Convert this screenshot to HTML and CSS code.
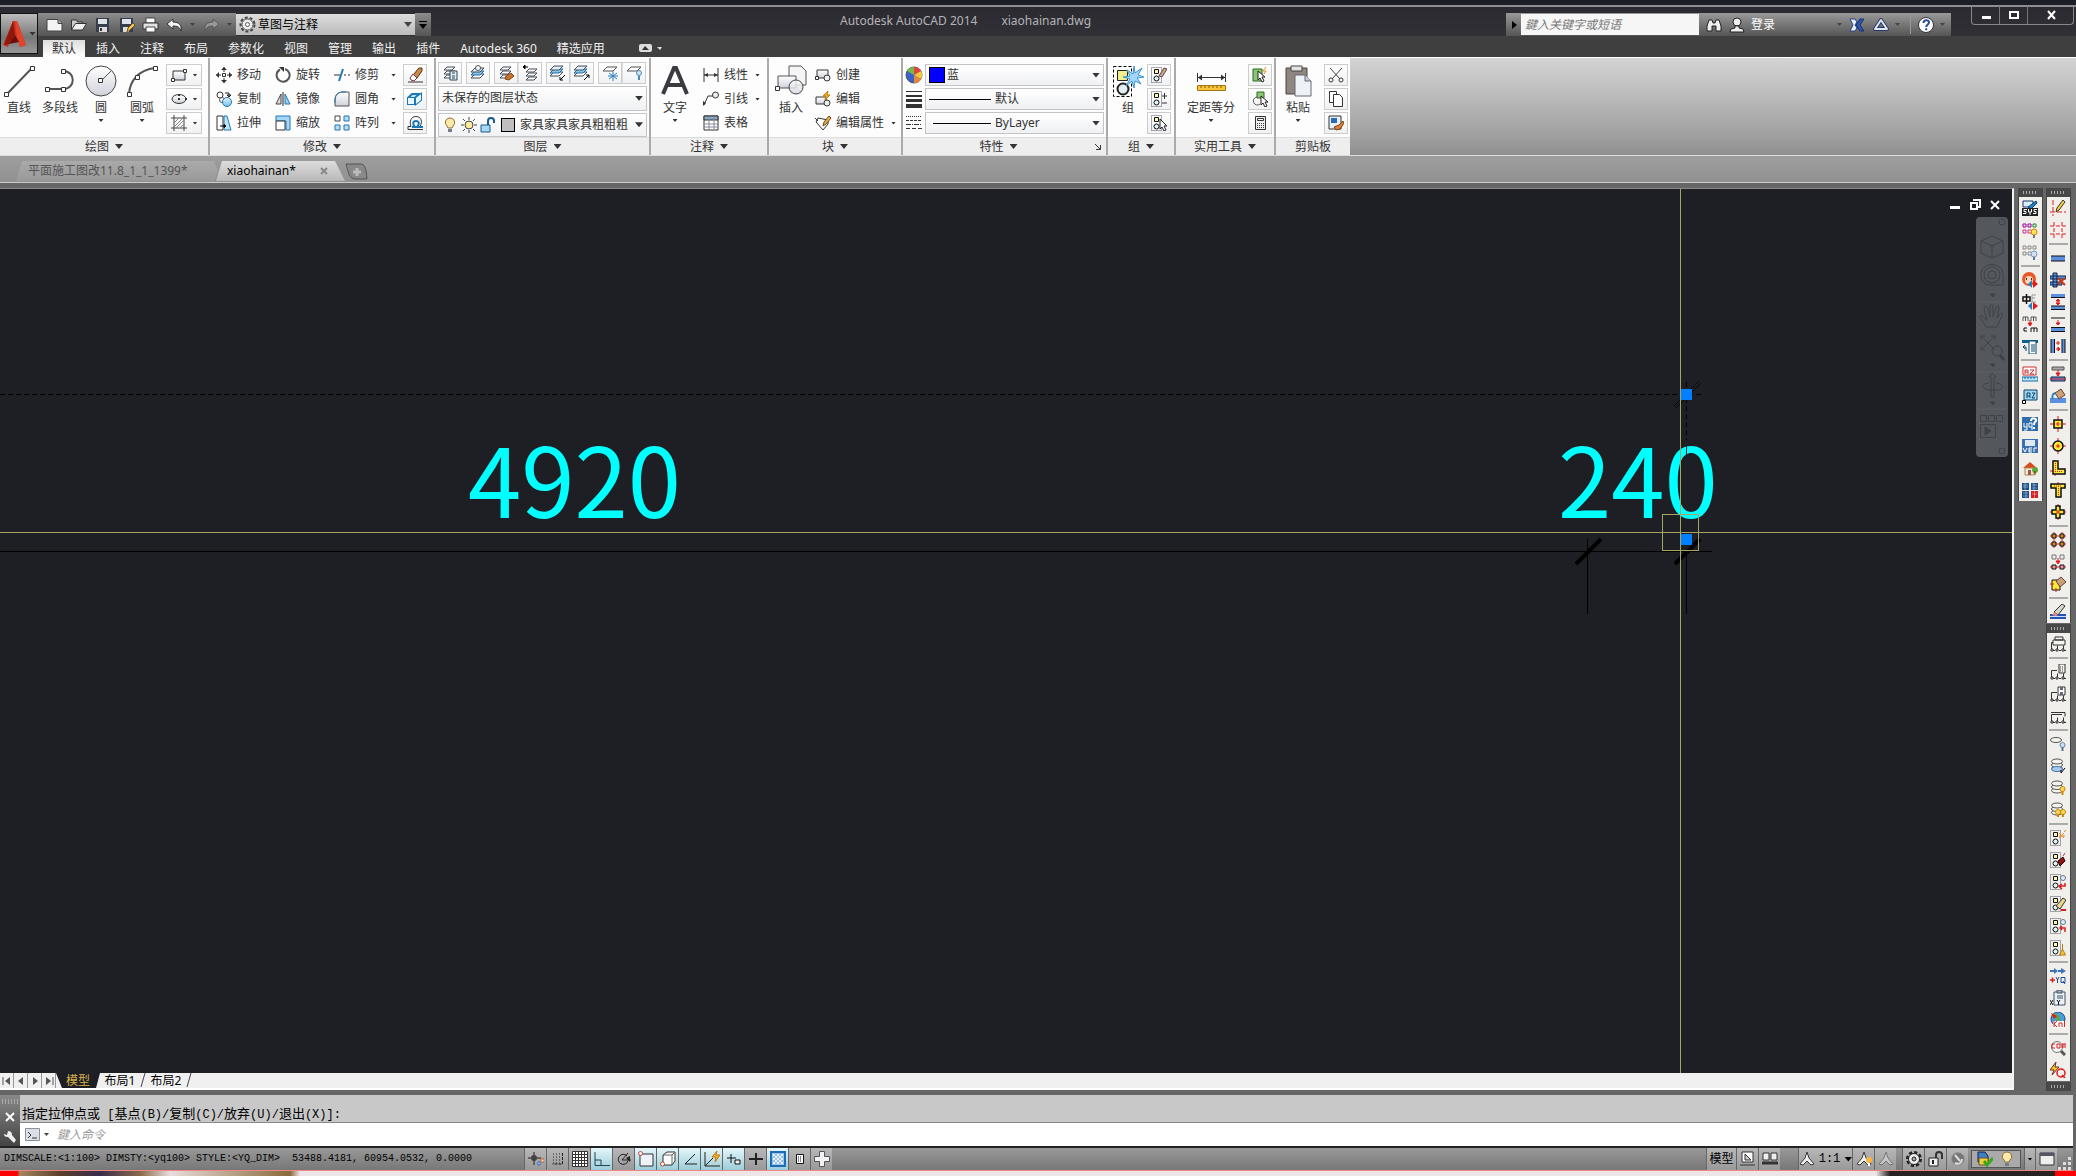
FILE: index.html
```html
<!DOCTYPE html>
<html lang="zh-CN">
<head>
<meta charset="utf-8">
<title>Autodesk AutoCAD 2014 - xiaohainan.dwg</title>
<link rel="stylesheet" href="styles.css">
</head>
<body>
<svg class="sprite" aria-hidden="true">
  <defs>
    <linearGradient id="steel" x1="0" y1="0" x2="0" y2="1"><stop offset="0" stop-color="#fff"/><stop offset="1" stop-color="#cfd2da"/></linearGradient>
    <linearGradient id="ice" x1="0" y1="0" x2="0" y2="1"><stop offset="0" stop-color="#e6f5fd"/><stop offset="1" stop-color="#6fbdea"/></linearGradient>
    <symbol id="stack" viewBox="0 0 16 16"><path d="M5 2h8l-3 3H2zM5 6h8l-3 3H2zM5 10h8l-3 3H2z" fill="#fff" stroke="#444a58"/></symbol>
    <symbol id="bluestack" viewBox="0 0 16 16"><path d="M5 9h9l-4 4H1z" fill="#fff" stroke="#444a58"/><path d="M5 6h9l-4 4H1z" fill="#85c5ec" stroke="#256da8"/><path d="M5 3h9l-4 4H1z" fill="#dfeffa" stroke="#444a58"/></symbol>
    <symbol id="pickset" viewBox="0 0 16 16"><path d="M.5.5h10v15H.5z" fill="none" stroke="#556" stroke-dasharray="1 1"/><path d="M3.500 2.500h4v4h-4z" fill="#fff9b0" stroke="#111"/><circle cx="5.500" cy="11.500" r="2.500" fill="#dff3f5" stroke="#111"/></symbol>
    <symbol id="tree" viewBox="0 0 16 16"><path d="M1.500 13V6.500H7M7.500 13V9.500M13.500 13V9.500M3 14.500h2M9 14.500h2M14 14.500h2" fill="none" stroke="#333"/><path d="M1 13h2v2H1zM6 13h2v2H6zM12 13h2v2h-2z" fill="#fff" stroke="#333"/></symbol>
    <symbol id="ovals" viewBox="0 0 16 16"><g fill="#f4f4ee" stroke="#555"><ellipse cx="7" cy="10.500" rx="5.500" ry="2.500"/><ellipse cx="7" cy="7" rx="5.500" ry="2.500"/><ellipse cx="7" cy="3.500" rx="5.500" ry="2.500"/></g></symbol>
    <symbol id="bulb" viewBox="0 0 16 16"><path d="M8 1a4.500 4.500 0 0 0-3 8l1 2h4l1-2a4.500 4.500 0 0 0-3-8z" fill="#ffe9a8" stroke="#8a713a"/><path d="M6 12h4v3H6z" fill="#777c88"/></symbol>
    <symbol id="compass" viewBox="0 0 16 16"><path d="M8 1L6 7l-5 6 3 1 4-4 4 4 3-1-5-6z" fill="#f0f0f0" stroke="#3a3a3a"/></symbol>
  </defs>
</svg>

<header class="titlebar">
  <button class="appmenu" aria-label="应用程序菜单">
    <svg width="26" height="30" viewBox="0 0 26 30"><path d="M11 2h4l9 24-6 2-1-5-9-1-2 6-5-2z" fill="#c8301e"/><path d="M13 2l2 0 9 24-6 2-3-9z" fill="#e0452c"/><path d="M11 2L2 26l5-1 6-9z" fill="#8f180e"/><path d="M7 25l6-9 4 7z" fill="#6d0e08"/></svg>
    <i class="caret"></i>
  </button>
  <div class="qat">
    <button aria-label="新建"><svg width="18" height="16"><path d="M1 2.500h11l4 4V14H1z" fill="#f4f4f4" stroke="#444"/><path d="M12 2.500v4h4" fill="#aaa" stroke="#444"/></svg></button>
    <button aria-label="打开"><svg width="18" height="16"><path d="M1.500 13V3h5l1 2h5v2" fill="#ccc" stroke="#333"/><path d="M1.500 13l4-6.500h11l-4 6.500z" fill="#f0f0f0" stroke="#333"/></svg></button>
    <button aria-label="保存"><svg width="16" height="16"><path d="M2 1h13v14H2z" fill="#363d4c"/><path d="M4 2h9v5H4z" fill="#dfe2e8"/><path d="M5 10h8v5H5z" fill="#ddd"/><path d="M6 11h2v3H6z" fill="#333"/></svg></button>
    <button aria-label="另存为"><svg width="18" height="16"><path d="M2 1h13v14H2z" fill="#363d4c"/><path d="M4 2h9v5H4z" fill="#dfe2e8"/><path d="M5 10h6v5H5z" fill="#ddd"/><path d="M9 15l1-4 5-5 2 2-5 5z" fill="#f4c353" stroke="#7a5314"/></svg></button>
    <button aria-label="打印"><svg width="18" height="16"><path d="M4 1h9v5H4z" fill="#fff" stroke="#444"/><path d="M1 6h15v6H1z" fill="#e2e2e2" stroke="#333"/><path d="M4 10h9v5H4z" fill="#fff" stroke="#444"/></svg></button>
    <button aria-label="放弃"><svg width="18" height="16"><path d="M1 7l6-5v3c6 0 9 3 8 9-1-4-4-5-8-5v3z" fill="#f4f4f4" stroke="#333"/></svg></button>
    <i class="caret tiny dim"></i>
    <button aria-label="重做"><svg width="18" height="16"><path d="M16 7l-6-5v3C4 5 1 8 2 14c1-4 4-5 8-5v3z" fill="#999" stroke="#555"/></svg></button>
    <i class="caret tiny dim"></i>
  </div>
  <label class="workspace">
    <svg width="17" height="17" viewBox="0 0 17 17"><circle cx="8.500" cy="8.500" r="7" fill="none" stroke="#444" stroke-width="2" stroke-dasharray="3 2"/><circle cx="8.500" cy="8.500" r="5.500" fill="#eee" stroke="#555"/><circle cx="8.500" cy="8.500" r="2" fill="#fff" stroke="#555"/></svg>
    <select aria-label="工作空间"><option>草图与注释</option></select>
    <i class="caret"></i>
  </label>
  <button class="qatmore" aria-label="自定义"><svg width="8" height="10"><path d="M0 1h8v1H0zM0 4h8L4 9z"/></svg></button>
  <h1 class="apptitle"><span>Autodesk AutoCAD 2014</span><span>xiaohainan.dwg</span></h1>
  <div class="infocenter">
    <button class="arrow" aria-label="展开"><svg width="6" height="8"><path d="M1 0l5 4-5 4z"/></svg></button>
    <input type="text" aria-label="搜索" placeholder="鍵入关键字或短语">
    <button aria-label="搜索"><svg width="16" height="16"><path d="M1 14V9l2-6h3l1 3h2l1-3h3l2 6v5h-5V9H6v5z" fill="#eee" stroke="#222"/></svg></button>
    <button class="signin"><svg width="16" height="16"><circle cx="8" cy="5" r="4" fill="#eee" stroke="#222"/><path d="M6 9v2l-4 1-1 3h14l-1-3-4-1V9z" fill="#eee" stroke="#222"/></svg><span>登录</span><i class="caret tiny dim"></i></button>
    <button aria-label="Exchange"><svg width="16" height="16"><path d="M1 2h5l2 3-2 3 2 3-2 3H1l3-6z" fill="#e8eef8" stroke="#24408a"/><path d="M15 2h-4L7 8l4 6h4l-4-6z" fill="#2c55ab" stroke="#18306c"/></svg></button>
    <button class="a360" aria-label="Autodesk 360"><svg width="18" height="16"><path d="M9 3L3 12h12z" fill="none" stroke="#243a6a" stroke-width="4" stroke-linejoin="round"/><path d="M9 3L3 12h12z" fill="none" stroke="#dfe6f2" stroke-width="2" stroke-linejoin="round"/></svg><i class="caret tiny dim"></i></button>
    <button class="help" aria-label="帮助"><svg width="18" height="18"><circle cx="9" cy="9" r="7.500" fill="#fff" stroke="#333"/><path d="M6.500 7c0-4 5.500-3.500 5.500-.5C12 8.500 9.200 8.500 9.200 11M9.200 12.200v2" fill="none" stroke="#2a4f9e" stroke-width="2"/></svg><i class="caret tiny dim"></i></button>
  </div>
  <div class="winbuttons">
    <button aria-label="最小化"><svg width="12" height="12"><path d="M2 7h9v3H2z" fill="#fff"/></svg></button>
    <button aria-label="最大化"><svg width="12" height="12"><path d="M2 3h8v6H2z" fill="none" stroke="#fff" stroke-width="2"/></svg></button>
    <button class="close" aria-label="关闭"><svg width="12" height="12"><path d="M3 2l7 8M10 2l-7 8" stroke="#fff" stroke-width="2"/></svg></button>
  </div>
</header>

<nav class="ribbontabs">
  <button class="on">默认</button><button>插入</button><button>注释</button><button>布局</button><button>参数化</button><button>视图</button><button>管理</button><button>输出</button><button>插件</button><button>Autodesk 360</button><button>精选应用</button>
  <button class="minimize" aria-label="最小化功能区"><svg width="24" height="10"><rect x="0" y="1" width="13" height="8" rx="2" fill="#ddd"/><path d="M3 7l3-4 4 4z" fill="#333"/><path d="M18 4h5l-2 3z" fill="#ddd"/></svg></button>
</nav>

<section class="ribbon">
  <div class="panel draw">
    <div class="body">
      <button class="big w1"><svg width="32" height="32"><path d="M3 30L29 3" stroke="#555" stroke-width="2"/><path d="M1.500 27.500h4v4h-4zM27.500 1.500h4v4h-4z" fill="#fff" stroke="#333"/></svg>直线</button>
      <button class="big w2"><svg width="32" height="32"><path d="M3 24h16c13 0 13-18 0-18" fill="none" stroke="#555" stroke-width="2"/><path d="M1.500 22.500h4v4h-4zM17.500 22.500h4v4h-4zM17.500 4.500h4v4h-4z" fill="#fff" stroke="#333"/></svg>多段线</button>
      <button class="big w1"><svg width="32" height="32"><circle cx="16" cy="16" r="15" fill="url(#steel)" stroke="#444"/><path d="M16 16L26 6" stroke="#555"/><path d="M13.500 13.500h4v4h-4z" fill="#fff" stroke="#333"/></svg>圆<i class="caret tiny"></i></button>
      <button class="big w2"><svg width="32" height="32"><path d="M3 29C4 15 13 5 29 3" fill="none" stroke="#555" stroke-width="2"/><path d="M1.500 27.500h4v4h-4zM9.500 10.500h4v4h-4zM27.500 1.500h4v4h-4z" fill="#fff" stroke="#333"/></svg>圆弧<i class="caret tiny"></i></button>
      <div class="rows">
        <button class="box split" aria-label="矩形"><svg width="16" height="16"><path d="M2 4h12v9H2z" fill="url(#steel)" stroke="#333"/><path d="M.5 11.500h3v3h-3zM12.500 2.500h3v3h-3z" fill="#fff" stroke="#333"/></svg><i class="caret tiny"></i></button>
        <button class="box split" aria-label="椭圆"><svg width="16" height="16"><ellipse cx="8" cy="8" rx="7" ry="4.500" fill="url(#steel)" stroke="#333"/><path d="M7 7h2v2H7zM14 7h2v2h-2zM7 3h2v2H7z" fill="#333"/></svg><i class="caret tiny"></i></button>
        <button class="box split" aria-label="图案填充"><svg width="16" height="16"><path d="M3 0v16M13 0v16M0 3h16M0 13h16" stroke="#444"/><path d="M3 8l5-5M3 12l9-9M5 13l8-8M9 13l4-4" stroke="#888"/></svg><i class="caret tiny"></i></button>
      </div>
    </div>
    <h2>绘图<i class="caret"></i></h2>
  </div>

  <div class="panel modify">
    <div class="body">
      <div class="rows c1">
        <button class="item"><svg width="16" height="16"><path d="M8 0v5M8 11v5M0 8h5M11 8h5" stroke="#333"/><path d="M5 3h6L8 0zM5 13h6l-3 3zM3 5v6L0 8zM13 5v6l3-3z" fill="#333"/><path d="M6.500 6.500h3v3h-3z" fill="#fff" stroke="#333"/></svg>移动</button>
        <button class="item"><svg width="16" height="16"><circle cx="4" cy="4" r="3" fill="#fff" stroke="#333"/><circle cx="6" cy="9" r="2.500" fill="#fff" stroke="#555"/><circle cx="11" cy="11" r="4.500" fill="url(#ice)" stroke="#2277b5"/><path d="M9 2h4v3M11 4h4l-2 2z" fill="none" stroke="#222"/></svg>复制</button>
        <button class="item"><svg width="16" height="16"><path d="M1 1h6v14H1z" fill="#fff" stroke="#333"/><path d="M8 1h3l4 14H8z" fill="#bfe3f7" stroke="#2277b5"/><path d="M4 11h5M8 9.500l2 1.500-2 1.500z" stroke="#000"/></svg>拉伸</button>
      </div>
      <div class="rows c1">
        <button class="item"><svg width="16" height="16"><path d="M5 2.500A6.500 6.500 0 1 0 10 2" fill="none" stroke="#555" stroke-width="2"/><path d="M4 0h5v5z" fill="#333"/></svg>旋转</button>
        <button class="item"><svg width="16" height="16"><path d="M6 3v10H1z" fill="#ddd" stroke="#444"/><path d="M10 3v10h5z" fill="#9bd2f3" stroke="#2277b5"/><path d="M8 1v14" stroke="#222"/></svg>镜像</button>
        <button class="item"><svg width="16" height="16"><path d="M1 1h14v14h-4V6H1z" fill="#a6d7f5" stroke="#2277b5"/><path d="M1 6h9v9H1z" fill="#fff" stroke="#333"/></svg>缩放</button>
      </div>
      <div class="rows c2">
        <button class="item"><svg width="16" height="16"><path d="M0 8h6M10 8h2M14 8h2" stroke="#333"/><path d="M5 14L9 2" stroke="#2277b5" stroke-width="2"/></svg>修剪<i class="caret tiny"></i></button>
        <button class="item"><svg width="16" height="16"><path d="M1 15V9c0-5 3-8 8-8h6v14z" fill="url(#steel)" stroke="#555"/><path d="M1 12V9c0-5 3-8 8-8h3" fill="none" stroke="#2277b5"/></svg>圆角<i class="caret tiny"></i></button>
        <button class="item"><svg width="16" height="16"><path d="M1 1h5v5H1z" fill="#fff" stroke="#444"/><path d="M10 1h5v5h-5zM1 10h5v5H1zM10 10h5v5h-5z" fill="#b5def6" stroke="#2277b5"/></svg>阵列<i class="caret tiny"></i></button>
      </div>
      <div class="rows">
        <button class="box" aria-label="删除"><svg width="16" height="16"><path d="M1 15h15" stroke="#333"/><path d="M6 8l6-7h3v3l-5 7z" fill="#c98a4b" stroke="#5a3413"/><path d="M3 11l3-4 4 4-3 3-3-1z" fill="#fff" stroke="#833"/></svg></button>
        <button class="box" aria-label="分解"><svg width="16" height="16"><path d="M1 7h6v6H1zM1 7l4-4h7L8 7zM9 7l5-4v6l-5 4z" fill="#bfe6fb" stroke="#1878b8" stroke-width="2"/><path d="M1 7h6v6H1zM9 7l5-4v6l-5 4z" fill="#e6f6ff"/></svg></button>
        <button class="box" aria-label="偏移"><svg width="16" height="16"><path d="M1 14.500h15M1 14.500v-3h3c-2-5 0-10 5-10s7 5 4 10h3" fill="none" stroke="#333"/><path d="M5 12h3c-3-3-2-6 1-6s4 3 1 6h6" fill="none" stroke="#1878b8" stroke-width="2"/></svg></button>
      </div>
    </div>
    <h2>修改<i class="caret"></i></h2>
  </div>

  <div class="panel layers">
    <div class="body stackbody">
      <div class="boxrow">
        <button class="box" aria-label="图层特性"><svg width="16" height="16"><use href="#stack"/><path d="M8 6h7v9H8z" fill="#dff0fa" stroke="#345"/><path d="M10 8h3M10 11h3M10 13h3" stroke="#345"/></svg></button>
        <button class="box" aria-label="置为当前"><svg width="16" height="16"><use href="#bluestack"/><circle cx="8" cy="3" r="2.500" fill="#fff" stroke="#555"/></svg></button>
        <span class="pair"><button class="box" aria-label="匹配"><svg width="16" height="16"><use href="#stack"/><path d="M8 11l5-3 3 3-5 4-4-1z" fill="#c5722c" stroke="#8a4410"/></svg></button><button class="box" aria-label="上一个"><svg width="16" height="16"><use href="#stack" x="2" y="2"/><path d="M1 2h5M3 0L1 2l2 2z" stroke="#000"/></svg></button></span>
        <span class="pair"><button class="box" aria-label="隔离"><svg width="16" height="16"><use href="#bluestack" x="-1" y="-2"/><path d="M15 10l-5 5M10 12v3h3" fill="none" stroke="#000"/></svg></button><button class="box" aria-label="取消隔离"><svg width="16" height="16"><use href="#bluestack" x="-1" y="-2"/><path d="M10 15l5-5M12 10h3v3" fill="none" stroke="#000"/></svg></button></span>
        <span class="pair"><button class="box" aria-label="冻结"><svg width="16" height="16"><path d="M5 2h10l-4 4H1z" fill="#fff" stroke="#555"/><path d="M11 6v10M7 8l8 6M15 8l-8 6M6 11h10" stroke="#2a7fc0"/></svg></button><button class="box" aria-label="关"><svg width="16" height="16"><path d="M5 2h10l-4 4H1z" fill="#fff" stroke="#555"/><circle cx="13" cy="8" r="2.500" fill="#cfe9fa" stroke="#4a89b8"/><path d="M12 11h2v4h-2z" fill="#4a89b8"/></svg></button></span>
      </div>
      <label class="combo"><select aria-label="图层状态"><option>未保存的图层状态</option></select><i class="caret"></i></label>
      <label class="combo layer">
        <svg width="16" height="16"><use href="#bulb"/></svg>
        <svg width="16" height="16"><circle cx="8" cy="8" r="4" fill="#ffe9a0" stroke="#444"/><path d="M8 0v3M8 13v3M0 8h3M13 8h3M2 2l2 2M12 12l2 2M14 2l-2 2M4 12l-2 2" stroke="#444"/></svg>
        <svg width="16" height="16"><path d="M1 8h9v7H1z" fill="#a6d7f5" stroke="#1c5a88"/><path d="M8 8V4c0-4 6-4 6 0v2" fill="none" stroke="#1c5a88" stroke-width="2"/></svg>
        <i class="swatch grey"></i>
        <select aria-label="图层"><option>家具家具家具粗粗粗</option></select><i class="caret"></i></label>
    </div>
    <h2>图层<i class="caret"></i></h2>
  </div>

  <div class="panel annotate">
    <div class="body">
      <button class="big w3"><svg width="32" height="32"><path d="M4 29L15 3h2l11 26M9 20h14" fill="none" stroke="#3a3a40" stroke-width="4"/></svg>文字<i class="caret tiny"></i></button>
      <div class="rows c3">
        <button class="item"><svg width="16" height="16"><path d="M1 1v14M15 1v14M1 8h14" stroke="#333"/><path d="M1 8l4-2v4zM15 8l-4-2v4z" fill="#333"/></svg>线性<i class="caret tiny"></i></button>
        <button class="item"><svg width="16" height="16"><path d="M1 14l4-9h5" fill="none" stroke="#333"/><circle cx="12.500" cy="4" r="3" fill="#eee" stroke="#333"/><path d="M0 15v-5l3 2z" fill="#333"/></svg>引线<i class="caret tiny"></i></button>
        <button class="item"><svg width="16" height="16"><path d="M1 1h14v14H1z" fill="#fff" stroke="#333"/><path d="M1 1h14v4H1z" fill="#8aa8c8" stroke="#333"/><path d="M6 2v13M11 2v13M1 9h14M1 12h14" stroke="#889"/></svg>表格</button>
      </div>
    </div>
    <h2>注释<i class="caret"></i></h2>
  </div>

  <div class="panel block">
    <div class="body">
      <button class="big w2"><svg width="32" height="32"><path d="M14 1h12l5 5v14H14z" fill="#f5f5f8" stroke="#555"/><path d="M3 11h18v12H3z" fill="url(#steel)" stroke="#555"/><circle cx="21" cy="22" r="7" fill="url(#steel)" fill-opacity=".8" stroke="#444"/><path d="M.5 21.500h4v4h-4z" fill="#fff" stroke="#333"/></svg>插入</button>
      <div class="rows c4">
        <button class="item"><svg width="16" height="16"><path d="M2 3h11v8H2z" fill="url(#steel)" stroke="#333"/><circle cx="12" cy="11" r="3" fill="#eee" stroke="#333"/><path d="M.5 9.500h3v3h-3z" fill="#fff" stroke="#333"/></svg>创建</button>
        <button class="item"><svg width="16" height="16"><path d="M1 6h10v7H1z" fill="url(#steel)" stroke="#333"/><circle cx="12" cy="12" r="3" fill="#eee" stroke="#333"/><path d="M13 0l-5 5h3l-1 4 5-5h-3z" fill="#f8b12c" stroke="#c5780a"/></svg>编辑</button>
        <button class="item"><svg width="16" height="16"><path d="M0 3l3 3M1 7l2-4 10 2v4l-5 6-6-7z" fill="#fff" stroke="#333"/><path d="M8 11l1-4 5-6 2 2-5 6z" fill="#f0ad4a" stroke="#6d4412"/></svg>编辑属性<i class="caret tiny"></i></button>
      </div>
    </div>
    <h2>块<i class="caret"></i></h2>
  </div>

  <div class="panel props">
    <div class="body stackbody">
      <label class="prop"><svg width="18" height="18"><circle cx="9" cy="9" r="8" fill="#3b62c8" stroke="#555"/><path d="M9 9V1a8 8 0 0 1 7 4z" fill="#e4473a"/><path d="M9 9V1a8 8 0 0 0-7 4z" fill="#79b84a"/><path d="M9 9l7-4a8 8 0 0 1 0 8z" fill="#f4c93c"/><path d="M9 9l7 4a8 8 0 0 1-7 4z" fill="#e58a3a"/></svg>
        <span class="combo"><i class="swatch blue"></i><select aria-label="颜色"><option>蓝</option></select><i class="caret"></i></span></label>
      <label class="prop"><svg width="18" height="18"><path d="M1 1.500h16" stroke="#333"/><path d="M1 6h16" stroke="#333" stroke-width="2"/><path d="M1 10.500h16" stroke="#333" stroke-width="3"/><path d="M1 16h16" stroke="#333" stroke-width="4"/></svg>
        <span class="combo"><i class="rule"></i><select aria-label="线宽"><option>默认</option></select><i class="caret"></i></span></label>
      <label class="prop"><svg width="18" height="18"><path d="M1 2.500h16" stroke="#333" stroke-dasharray="1 1"/><path d="M1 6.500h16" stroke="#333" stroke-dasharray="3 1"/><path d="M1 10.500h16" stroke="#333" stroke-dasharray="5 1 1 1"/><path d="M1 14.500h16" stroke="#333" stroke-dasharray="4 2"/></svg>
        <span class="combo"><i class="rule short"></i><select aria-label="线型"><option>ByLayer</option></select><i class="caret"></i></span></label>
    </div>
    <h2><span></span><span>特性<i class="caret"></i></span><button aria-label="特性面板"><svg width="8" height="8"><path d="M1 1l5 5M2 6.500h4.500V2" fill="none" stroke="#333"/></svg></button></h2>
  </div>

  <div class="panel group">
    <div class="body">
      <button class="big w1"><svg width="32" height="32"><path d="M1.500 1.500h18v30h-18z" fill="none" stroke="#000" stroke-dasharray="3 2"/><path d="M5.500 5.500h10v10h-10z" fill="#f2ee8c" stroke="#222"/><circle cx="11" cy="24" r="5.500" fill="#dff0f2" stroke="#222" stroke-width="2"/><path d="M22 1l1 7 7-5-4 7 6 2-7 1 4 6-6-3-1 7-2-7-6 5 4-7-7-2 7-1-3-6 6 4z" fill="#9fd8fa" stroke="#3f93cf"/></svg>组</button>
      <div class="rows">
        <button class="box" aria-label="解除编组"><svg width="16" height="16"><use href="#pickset"/><path d="M8 9l5-8 3 1-5 8z" fill="#c9a58a" stroke="#644"/></svg></button>
        <button class="box" aria-label="组编辑"><svg width="16" height="16"><use href="#pickset"/><path d="M11 5h5M13.500 2v6M11 12h5" stroke="#333"/></svg></button>
        <button class="box" aria-label="组选择"><svg width="16" height="16"><use href="#pickset"/><path d="M9 4v10l2-2 2 4 2-1-2-4h3z" fill="#fff" stroke="#222"/></svg></button>
      </div>
    </div>
    <h2>组<i class="caret"></i></h2>
  </div>

  <div class="panel utils">
    <div class="body">
      <button class="big w4"><svg width="32" height="32"><path d="M2.500 8v9M30.500 8v9M3 12.500h27" stroke="#333"/><path d="M3 12.500l4-3v6zM30 12.500l-4-3v6z" fill="#333"/><path d="M2.500 20.500h28v5h-28z" fill="#f6c53c" stroke="#a87410"/><path d="M6 21v2M10 21v2M14 21v2M18 21v2M22 21v2M26 21v2" stroke="#865a08"/></svg>定距等分<i class="caret tiny"></i></button>
      <div class="rows">
        <button class="box" aria-label="快速选择"><svg width="16" height="16"><path d="M1 2h9v12H1z" fill="#8cc777" stroke="#2c6a1c"/><path d="M6 4v9l2-2 2 4 2-1-2-4h3z" fill="#fff" stroke="#222"/><path d="M14 0l-3 4h3l-2 3" fill="none" stroke="#f08a1c"/></svg></button>
        <button class="box" aria-label="全部选择"><svg width="16" height="16"><path d="M5 1h7v6H5z" fill="#8cc777" stroke="#2c6a1c"/><path d="M5 6a4 4 0 1 0 3 7" fill="none" stroke="#555"/><path d="M9 5v9l2-2 2 4 2-1-2-4h3z" fill="#fff" stroke="#222"/></svg></button>
        <button class="box" aria-label="计算器"><svg width="16" height="16"><path d="M3.500 1.500h10v13h-10z" fill="#eee" stroke="#333"/><path d="M5.500 3.500h6v2h-6z" fill="#fff" stroke="#333"/><path d="M5 8.500h7M5 10.500h7M5 12.500h7" stroke="#333" stroke-dasharray="1 1"/></svg></button>
      </div>
    </div>
    <h2>实用工具<i class="caret"></i></h2>
  </div>

  <div class="panel clip">
    <div class="body">
      <button class="big w2"><svg width="32" height="32"><path d="M4 3h21v26H4z" fill="#8f8680" stroke="#4a443f"/><path d="M9 1h11v5H9z" fill="#e4e4e4" stroke="#444"/><path d="M13 10h10l6 6v15H13z" fill="#eef1f6" stroke="#667"/><path d="M23 10v6h6" fill="#ccd" stroke="#667"/></svg>粘贴<i class="caret tiny"></i></button>
      <div class="rows">
        <button class="box" aria-label="剪切"><svg width="16" height="16"><path d="M2 1l10 11M14 1L4 12" stroke="#444"/><circle cx="3" cy="13" r="2" fill="#fff" stroke="#333"/><circle cx="13" cy="13" r="2" fill="#fff" stroke="#333"/></svg></button>
        <button class="box" aria-label="复制"><svg width="16" height="16"><path d="M1.500.5h7v11h-7z" fill="#fff" stroke="#333"/><path d="M5.500 3.500h6l3 3v9h-9z" fill="#fff" stroke="#333"/></svg></button>
        <button class="box" aria-label="特性匹配"><svg width="16" height="16"><path d="M1 1h12v13H1z" fill="#e8f1fa" stroke="#333"/><path d="M3 3h6v5H3z" fill="#2a6db2"/><path d="M6 12l5-2 4-4 1 2-4 6-4 1z" fill="#d8813a" stroke="#7e4110"/></svg></button>
      </div>
    </div>
    <h2>剪贴板</h2>
  </div>
</section>

<nav class="doctabs">
  <button class="doc first"><span>平面施工图改11.8_1_1_1399*</span></button>
  <button class="doc active"><span>xiaohainan*</span><svg width="8" height="8"><path d="M1 1l6 6M7 1L1 7" stroke="#888" stroke-width="2"/></svg></button>
  <button class="newdoc" aria-label="新图形"><svg width="24" height="18"><path d="M1 1h14c5 0 6 4 7 15H10C4 16 3 8 1 1z" fill="#888" stroke="#555"/><path d="M8 9h8M12 5v8" stroke="#bbb" stroke-width="3"/></svg></button>
</nav>

<main class="work">
  <section class="view">
    <div class="canvas">
      <svg class="drawing" role="img" aria-label="图形">
        <g transform="translate(0 -189)">
          <g fill="none" stroke="#000" shape-rendering="crispEdges">
            <path d="M0 394.500h1702M1686.500 382v74" stroke-dasharray="5 3"/>
            <path d="M0 551.500h1712M1587.500 539v75M1686.500 551v63"/>
          </g>
          <path d="M1576 564l25-25M1675 564l25-25" stroke="#000" stroke-width="4"/>
          <path d="M1674 406l25-25M1676 408l25-25" stroke="#000" stroke-dasharray="2 1"/>
          <text x="468" y="518">4920</text>
          <text x="1558" y="518">240</text>
          <path d="M1686.500 440v16" stroke="#222"/>
          <path d="M0 532.500h2012M1680.500 189v890M1662.500 514.500h36v36h-36z" fill="none" stroke="#a3a562" shape-rendering="crispEdges"/>
          <path d="M1681 389h11v11h-11zM1681 534h11v11h-11z" fill="#007fff"/>
        </g>
      </svg>
      <div class="mdi">
        <button aria-label="最小化"><svg width="12" height="12"><path d="M1 7h10v3H1z" fill="#fff"/></svg></button>
        <button aria-label="还原"><svg width="12" height="12"><path d="M4 1h7v7H9M2 4h6v6H2z" fill="none" stroke="#fff" stroke-width="2"/></svg></button>
        <button aria-label="关闭"><svg width="12" height="12"><path d="M2 2l8 8M10 2l-8 8" stroke="#fff" stroke-width="2"/></svg></button>
      </div>
      <svg class="navbar" width="32" height="240" fill="none" stroke="#3f4247" aria-label="导航栏">
        <circle cx="26" cy="5" r="3"/><circle cx="26" cy="234" r="3"/>
        <path d="M5 24l11-5 11 5v12l-11 5-11-5zM5 24l11 5 11-5M16 29v12"/>
        <path d="M5 58c0-14 22-14 22 0v10H16c-8 0-11-4-11-10z"/><circle cx="16" cy="58" r="8"/><circle cx="16" cy="58" r="4"/>
        <path d="M14 77h5l-2 3zM14 147h5l-2 3zM14 185h5l-2 3z" fill="#3f4247"/>
        <path d="M1 85h30M1 155h30M1 192h30" stroke="#5f6267"/>
        <path d="M10 110c-5-9-9-12-4-11l5 4-3-11c0-3 3-3 4 0l2 8v-10c0-3 3-3 3 0v10l3-9c1-3 4-2 3 1l-2 9 3-4c3-2 3 0 2 2l-5 11z"/>
        <path d="M5 119l14 14M19 119L5 133M5 123v-4h4M15 119h4v4M5 129v4h4" /><circle cx="21" cy="134" r="5"/><path d="M24 138l4 5" stroke-width="3"/>
        <path d="M16 156l-3 4h2v20h3v-20h2zM13 166c-7 1-9 5 0 7h10M20 166c8 1 8 5 3 7"/>
        <path d="M4.500 198.500h6v6h-6zM12.500 198.500h6v6h-6zM20.500 198.500h6v6h-6zM4.500 207.500h15v13h-15z"/><path d="M9 210l6 4-6 4z" fill="#3f4247"/>
      </svg>
    </div>
    <nav class="layouts">
      <button class="step" aria-label="首页"><svg width="10" height="10"><path d="M1 1v8" stroke="#555"/><path d="M8 1v8L3 5z" fill="#555"/></svg></button><button class="step" aria-label="上一页"><svg width="10" height="10"><path d="M7 1v8L2 5z" fill="#555"/></svg></button><button class="step" aria-label="下一页"><svg width="10" height="10"><path d="M3 1v8l5-4z" fill="#555"/></svg></button><button class="step" aria-label="末页"><svg width="10" height="10"><path d="M9 1v8" stroke="#555"/><path d="M2 1v8l5-4z" fill="#555"/></svg></button>
      <button class="model">模型</button><button class="sheet">布局1</button><svg class="slash" width="6" height="14"><path d="M5 0L1 14" stroke="#444"/></svg><button class="sheet">布局2</button><svg class="slash" width="6" height="14"><path d="M5 0L1 14" stroke="#444"/></svg>
    </nav>
  </section>

  <aside class="tools">
    <div class="column">
      <div class="toolbar"><i class="grip"></i>
        <button><svg><path d="M1 1h10v6H1z" fill="#d9eef9" stroke="#236"/><path d="M6 7l8-6 1 2-6 6z" fill="#1b82c8" stroke="#146"/><path d="M0 8h16v8H0z" fill="#222"/><path d="M5 9.500H2v2h2v2H1M6.500 9v3l3 0v-3M8 12v3M15 9.500h-3v2h2v2h-3" fill="none" stroke="#fff"/></svg></button>
        <button><svg><path d="M1 2h3v3H1zM6 2h3v3H6z" fill="none" stroke="#909"/><path d="M11 2h3v3h-3z" fill="none" stroke="#282"/><path d="M1 8h3v3H1zM9 8H6v3h3" fill="none" stroke="#c38"/><circle cx="12" cy="10" r="3" fill="#ffdf60" stroke="#c80"/><path d="M11 13h2v3h-2z" fill="#777"/></svg></button>
        <button><svg><path d="M1 2h3v3H1zM6 2h3v3H6zM11 2h3v3h-3zM1 8h3v3H1zM9 8H6v3h3" fill="none" stroke="#888"/><circle cx="12" cy="10" r="3" fill="#cfe0f0" stroke="#7a98b8"/><path d="M11 13h2v3h-2z" fill="#579"/></svg></button>
        <hr>
        <button><svg><circle cx="7" cy="7" r="7" fill="#e8582a"/><circle cx="7" cy="8" r="4" fill="#fbd7b8"/><path d="M4 7h1M9 7h1" stroke="#333" stroke-width="2"/><path d="M10 8v8l-4-4z" fill="#1b82c8"/><path d="M11 8v8l5-4z" fill="#e01b1b"/></svg></button>
        <button><svg><path d="M1 3h7v4H1zM4.500 0v10" fill="none" stroke="#111" stroke-width="1.500"/><path d="M14 1h-4v7h4M10 4h3" fill="none" stroke="#999"/><path d="M10 8v8l-4-4z" fill="#1b82c8"/><path d="M11 8v8l5-4z" fill="#e01b1b"/></svg></button>
        <button><svg><path d="M1 5V1h5v4M3.500 1v4M9 5V1h5v4M11.500 1v4" fill="none" stroke="#555"/><path d="M8 4v5M6 7h4l-2 3z" fill="#e01b1b" stroke="#e01b1b"/><path d="M5 12H2v3h3M9 16v-4h6v4M12 12v4" fill="none" stroke="#111"/></svg></button>
        <button><svg><path d="M0 2h16v3H0z" fill="#0d6390"/><path d="M7 3h7v13H7z" fill="#fff" stroke="#0d4870"/><path d="M9 7h4M9 9h4M9 11h4M9 13h4" stroke="#0d4870"/><path d="M1 9h3v4M1 9l2-2M1 9l2 2" fill="none" stroke="#146"/></svg></button>
        <hr>
        <button><svg><path d="M1 1h13v8H1z" fill="#fff" stroke="#c33"/><path d="M3 8V4h3v4M3 6h3M8 4h4L8 8h4" fill="none" stroke="#c33"/><path d="M0 11h16v4H0z" fill="#bfe3f7" stroke="#146ea8"/><path d="M3 11v2M6 11v2M9 11v2M12 11v2" stroke="#146ea8"/></svg></button>
        <button><svg><path d="M2 2h13v10H2z" fill="#9fd6f3" stroke="#146"/><path d="M5 10V5h3v5M5 8h3M10 5h3l-3 5h3" fill="none" stroke="#146"/><path d="M.5 12.500h3v3h-3z" fill="#fff" stroke="#000"/></svg></button>
        <hr>
        <button><svg><path d="M0 1h16v14H0z" fill="#2f6dab"/><path d="M2 7v4h3V7M5 11v3H2M7 7h3v4H7zM10 11v3" fill="none" stroke="#fff"/><path d="M9 5c0-4 6-3 5 0-1 1-2 1-2 4M12 11v2" fill="none" stroke="#fff" stroke-width="2"/></svg></button>
        <button><svg><path d="M0 1h16v14H0z" fill="#3a70ad"/><path d="M3 2h10v6H3z" fill="#dfe8f2"/><path d="M1 10l2 4 2-4M10 10H7v4h3M7 12h3M12 14v-4h3" fill="none" stroke="#fff"/></svg></button>
        <button><svg><path d="M1 8l7-6 7 6z" fill="#d94a1e"/><path d="M3 8h9v7H3z" fill="#f7ead0" stroke="#a85"/><path d="M6 10h3v5H6z" fill="#955"/><circle cx="13" cy="10" r="3" fill="#5aa83a"/><path d="M13 11v4" stroke="#630"/></svg></button>
        <button><svg><path d="M0 1h7v7H0zM0 9h7v7H0zM9 1h7v7H9z" fill="#1c4f86"/><path d="M9 9h7v7H9z" fill="#d81e1e"/><path d="M1 3h5M1 5h5M3 1v7M10 3h5M10 6h5M12 1v7M1 11h5M1 14h5M4 9v7M10 12h5M12.500 9v7" stroke="#cde" stroke-opacity=".5"/></svg></button>
      </div>
    </div>
    <div class="column">
      <div class="toolbar"><i class="grip"></i>
        <button><svg><path d="M3 0v16M0 12h16" stroke="#d22" stroke-dasharray="5 2"/><path d="M6 12l1-4 6-8 2 2-6 8z" fill="#f2d24a" stroke="#432"/></svg></button>
        <button><svg><path d="M4 0v16M12 0v16M0 4h16M0 12h16" stroke="#d22" stroke-dasharray="4 2"/></svg></button>
        <hr>
        <button><svg><path d="M1 6h14v5H1z" fill="#5b8fe0"/><path d="M1 6h14M1 11h14" stroke="#111"/></svg></button>
        <button><svg><path d="M0 4h16v3H0zM0 10h12v3H0zM3 1h4v14H3z" fill="#5b8fe0" stroke="#124"/><path d="M8 6l7 7M8 12l7-6" stroke="#c43818" stroke-width="2"/></svg></button>
        <button><svg><path d="M1 0h14v3H1zM1 12h14v3H1z" fill="#5b8fe0"/><path d="M1 3.500h14M1 12h14M1 15.500h14" stroke="#111"/><path d="M8 6v4M6 7l2-2 2 2zM6 9l2 2 2-2z" fill="#e01b1b" stroke="#e01b1b"/></svg></button>
        <button><svg><path d="M1 12h14v3H1z" fill="#5b8fe0"/><path d="M1 2h14M1 11.500h14M1 15.500h14" stroke="#111"/><path d="M8 4v3M6 7h4l-2 2z" fill="#e01b1b" stroke="#e01b1b"/></svg></button>
        <button><svg><path d="M1 1h3v14H1zM12 1h3v14h-3z" fill="#5b8fe0"/><path d="M1 1v14M4.500 1v14M12 1v14M15 1v14" stroke="#111"/><path d="M6 5h4M8 3v4M6 11h3M8 9l2 2-2 2z" stroke="#e01b1b" fill="#e01b1b"/></svg></button>
        <hr>
        <button><svg><path d="M2 1h12v3H2z" fill="#aaa" stroke="#555"/><path d="M8 4v4M6 7h4l-2 3z" fill="#e01b1b" stroke="#e01b1b"/><path d="M1 11h14v4H1z" fill="#5b8fe0" stroke="#124"/><path d="M0 13h16" stroke="#e01b1b"/></svg></button>
        <button><svg><path d="M0 10h16v5H0z" fill="#5b8fe0"/><path d="M5 5l6-4 4 6-6 4z" fill="#caa07a" stroke="#643"/><path d="M5 5c-3 1-3 4-2 6" fill="none" stroke="#28c" stroke-width="2"/></svg></button>
        <hr>
        <button><svg><path d="M8 0v16M0 8h16" stroke="#e01b1b"/><path d="M4 4h8v8H4z" fill="#fce83a" stroke="#111" stroke-width="1.500"/><path d="M8 6v4M6 8h4" stroke="#e01b1b"/></svg></button>
        <button><svg><path d="M8 0v16M0 8h16" stroke="#e01b1b"/><circle cx="8" cy="8" r="5" fill="#fce83a" stroke="#111" stroke-width="1.500"/><path d="M8 6v4M6 8h4" stroke="#e01b1b"/></svg></button>
        <button><svg><path d="M5 0v16M0 11h16" stroke="#e01b1b"/><path d="M3 1h5v8h7v5H3z" fill="#fce83a" stroke="#111" stroke-width="1.500"/><path d="M5.500 3v9M5 11.500h7" stroke="#e01b1b" stroke-dasharray="1 1"/></svg></button>
        <button><svg><path d="M8 0v16M0 4h16" stroke="#e01b1b"/><path d="M1 2h14v4h-4v9H6V6H1z" fill="#fce83a" stroke="#111" stroke-width="1.500"/><path d="M8.500 4v9M4 4h8" stroke="#e01b1b" stroke-dasharray="1 1"/></svg></button>
        <button><svg><path d="M8 0v16M0 8h16" stroke="#e01b1b"/><path d="M6 2h4v4h4v4h-4v4H6v-4H2V6h4z" fill="#fce83a" stroke="#111" stroke-width="1.500"/><path d="M8 6v4M6 8h4" stroke="#e01b1b"/></svg></button>
        <hr>
        <button><svg><path d="M4 0v16M12 0v16M0 4h16M0 12h16" stroke="#e01b1b"/><path d="M2 2h4v4H2zM10 2h4v4h-4zM2 10h4v4H2zM10 10h4v4h-4z" fill="#c98a28" stroke="#111"/></svg></button>
        <button><svg><path d="M2 1h4v4H2zM10 1h4v4h-4z" fill="#eee" stroke="#777"/><path d="M8 4v3M6 7h4l-2 3z" fill="#e01b1b" stroke="#e01b1b"/><path d="M0 13h16" stroke="#e01b1b"/><path d="M2 11h4v4H2zM10 11h4v4h-4z" fill="#e9a" stroke="#111"/></svg></button>
        <button><svg><path d="M2 4h8v10H2z" fill="#fce83a" stroke="#111"/><path d="M6 5l5-4 5 5-6 5z" fill="#caa07a" stroke="#643"/><path d="M0 8h4M6 12v4" stroke="#e01b1b"/></svg></button>
        <hr>
        <button><svg><path d="M0 11h16v4H0z" fill="#cfe0f7"/><path d="M0 11h16M0 14h16" stroke="#2255b8" stroke-width="2"/><path d="M4 8l8-8 3 2-7 9z" fill="#d8d8c8" stroke="#333"/><path d="M4 8l4 3-2 1-4-1z" fill="#e88"/></svg></button>
      </div>
      <div class="toolbar"><i class="grip"></i>
        <button><svg><use href="#tree"/><path d="M5 1h8v3H5zM3 4h12v5H3z" fill="#f5f5f0" stroke="#333"/></svg></button>
        <hr>
        <button><svg><use href="#tree"/><path d="M9 0h6v9H9z" fill="#f5f5f0" stroke="#333"/><path d="M10 3h4M10 5h4M10 7h4" stroke="#444" stroke-dasharray="1 1"/></svg></button>
        <button><svg><use href="#tree"/><path d="M8 1h7v8H8z" fill="#fff" stroke="#333"/><path d="M10 1h3v3h-3zM10 6h3v3h-3z" fill="#667"/></svg></button>
        <button><svg><use href="#tree"/><path d="M1 4.500h14v4M6 6.500h6" fill="none" stroke="#333"/></svg></button>
        <hr>
        <button><svg><ellipse cx="6" cy="4" rx="5.500" ry="2.500" fill="#f4f4ee" stroke="#555"/><circle cx="12.500" cy="9" r="2.500" fill="#cfe0f7" stroke="#68a"/><path d="M11.500 11h2v4h-2z" fill="#579"/></svg></button>
        <button><svg><use href="#ovals"/><ellipse cx="7" cy="11" rx="5.500" ry="2.500" fill="#a9c9ee" stroke="#47a"/><path d="M15 10l-4 5v-3" fill="none" stroke="#000"/></svg></button>
        <button><svg><use href="#ovals"/><circle cx="12.500" cy="9" r="2.500" fill="#ffd860" stroke="#c80"/><path d="M11.500 11h2v4h-2z" fill="#c80"/></svg></button>
        <button><svg><use href="#ovals"/><circle cx="8" cy="10" r="2.500" fill="#ffd860" stroke="#c80"/><circle cx="13" cy="10" r="2.500" fill="#ffd860" stroke="#c80"/><path d="M7 12h2v3H7zM12 12h2v3h-2z" fill="#c80"/></svg></button>
        <hr>
        <button><svg><use href="#pickset"/><path d="M9 3l5 5M14 3L9 8M9 6h6M14 2l2-2" stroke="#e88a18"/></svg></button>
        <button><svg><use href="#pickset"/><path d="M8 9l5-4 2 4-5 5z" fill="#8c1414" stroke="#300"/><path d="M13 4l2-3" stroke="#c33"/></svg></button>
        <button><svg><use href="#pickset"/><circle cx="13" cy="4" r="2.500" fill="#def" stroke="#678"/><path d="M15 9v3h-5M12 10l-3 2 3 3" fill="none" stroke="#e01b1b" stroke-width="1.500"/></svg></button>
        <button><svg><use href="#pickset"/><path d="M6 10l7-8 3 2-6 9z" fill="#e8d48a" stroke="#333"/><path d="M11 14h5" stroke="#e01b1b" stroke-width="2"/></svg></button>
        <button><svg><use href="#pickset"/><circle cx="13" cy="4" r="2.500" fill="#def" stroke="#678"/><path d="M10 10h5v4M12 8l-2 2 2 2" fill="none" stroke="#e01b1b" stroke-width="1.500"/></svg></button>
        <button><svg><use href="#pickset"/><path d="M12.500 4v6M12.500 9l-3 6h6z" fill="#f4c33c" stroke="#b77a10"/></svg></button>
        <hr>
        <button><svg><path d="M0 2h4V0l4 3-4 3V4H0zM8 2h3V0l5 3-5 3V4H8z" fill="#3b74b8"/><path d="M0 12h5M2.500 9.500v5" stroke="#e01b1b" stroke-width="1.500"/><path d="M6 9l1.500 3L9 9M7.500 12v3M11 9.500h4v5h-4zM13 13l2 3" fill="none" stroke="#1b4f9a"/></svg></button>
        <button><svg><path d="M4 2h11v13H4z" fill="#e8f0f8" stroke="#456"/><path d="M7 0h5v3H7z" fill="#9ab" stroke="#456"/><path d="M7 6h6M7 8h6" stroke="#456"/><path d="M0 10l3 5M3 10l-3 5M7 10l1.500 2L10 10M8.500 12v3" fill="none" stroke="#111"/></svg></button>
        <button><svg><circle cx="8" cy="7" r="7" fill="#4f9bd6" stroke="#1c4f86"/><path d="M3 3c4 0 6 3 5 6" fill="none" stroke="#5a3" stroke-width="3"/><path d="M1 1l6 3-3 3z" fill="#e01b1b"/><path d="M3 9h13v7H3z" fill="#fff"/><path d="M4 9v6M7 9l-3 3 3 3M9 15v-4h3v4M14.500 9v6" fill="none" stroke="#d81e1e"/></svg></button>
        <hr>
        <button><svg><circle cx="7" cy="7" r="5.500" fill="#f5f5f5" stroke="#777"/><path d="M11 11l4 4" stroke="#555" stroke-width="3"/><path d="M5 4H2v4h3M7 4h3v4H7zM12 8V4h4v4M14 4v4" fill="none" stroke="#d81e1e"/></svg></button>
        <button><svg><path d="M6 0L0 8h4l-2 5 7-8H5z" fill="#ffc21c" stroke="#633"/><circle cx="11" cy="11" r="4" fill="none" stroke="#e01b1b" stroke-width="1.500"/><path d="M12 13l3 3" stroke="#e01b1b" stroke-width="1.500"/></svg></button>
      </div>
      <div class="toolbar"><i class="grip"></i></div>
    </div>
  </aside>
</main>

<section class="command">
  <div class="handle"><i class="dots"></i>
    <button aria-label="关闭"><svg width="12" height="12"><path d="M2 2l8 8M10 2l-8 8" stroke="#fff" stroke-width="2"/></svg></button>
    <button aria-label="自定义"><svg width="14" height="14"><path d="M1 4l3 1 1-4c4 0 4 3 4 4l4 5-2 3-6-6C2 7 1 6 1 4z" fill="#eee"/></svg></button>
  </div>
  <div class="lines">
    <p>指定拉伸点或<code> [</code>基点<code>(B)/</code>复制<code>(C)/</code>放弃<code>(U)/</code>退出<code>(X)]:</code></p>
    <label><svg width="15" height="14"><path d="M.5.5h14v12H.5z" fill="#dcdfe6" stroke="#8a8f9c"/><path d="M3 4l3 3-3 3M7 10h5" fill="none" stroke="#333"/></svg><i class="caret tiny dim"></i><input type="text" aria-label="命令" placeholder="鍵入命令"></label>
  </div>
</section>

<footer class="status">
  <span class="readout"><span>DIMSCALE:&lt;1:100&gt; DIMSTY:&lt;yq100&gt; STYLE:&lt;YQ_DIM&gt;</span><span>53488.4181, 60954.0532, 0.0000</span></span>
  <div class="toggles">
    <button><svg><path d="M0 7h13M6 1v13" stroke="#222"/><path d="M4 5h4v4H4z" fill="none" stroke="#222"/><path d="M10 11h2v3h-2z" fill="#fff" stroke="#26c"/><path d="M13 8h3v3h-3z" fill="#fff" stroke="#c52"/></svg></button>
    <button><svg><path d="M3 3h8M3 6h8M3 9h8M3 12h8" stroke="#222" stroke-dasharray="1 2"/><path d="M12.500 2v11h-10" fill="none" stroke="#222" stroke-dasharray="3 1"/></svg></button>
    <button><svg><path d="M.5.5h15v15H.5zM3.500 0v16M6.500 0v16M9.500 0v16M12.500 0v16M0 3.500h16M0 6.500h16M0 9.500h16M0 12.500h16" fill="#fff" stroke="#333"/></svg></button>
    <button class="on"><svg><path d="M1 1v13.500h15M1 9h6v5" fill="none" stroke="#245"/></svg></button>
    <button><svg><path d="M11 5a5 5 0 1 0 1 5M6 9l6-7M6 9h9" fill="none" stroke="#222"/><path d="M10 7l4 4V5z" fill="#222"/></svg></button>
    <button class="on"><svg><path d="M2 3h13v12H2z" fill="#eef2f8" stroke="#333"/><circle cx="2.500" cy="2.500" r="2" fill="#fff" stroke="#c43"/></svg></button>
    <button class="on"><svg><path d="M3 4l4-3h8v9l-3 4H3z" fill="#fff" stroke="#333"/><path d="M3 4h9v10M12 4l3-3" fill="none" stroke="#666"/><circle cx="2.500" cy="13" r="2" fill="#fff" stroke="#c43"/></svg></button>
    <button class="on"><svg><path d="M13 3L3 13h12" fill="none" stroke="#222"/></svg></button>
    <button class="on"><svg><path d="M1 1v14h15M1 15l8-8" fill="none" stroke="#222"/><path d="M13 0L8 6h4l-1 5 5-7h-4z" fill="#f8b12c" stroke="#c5780a"/></svg></button>
    <button class="on"><svg><path d="M1 7h9M5 3v9" stroke="#111"/><path d="M9 9h5v4H9z" fill="#eee" stroke="#111"/></svg></button>
    <button><svg><path d="M1 8h14M8 2v12" stroke="#222" stroke-width="2"/></svg></button>
    <button class="on"><svg><path d="M1 1h14v14H1z" fill="#9cc4ea" stroke="#1e6bb8" stroke-width="2"/><path d="M3 4h10M3 8h10M3 12h10" stroke="#e4f0fa" stroke-width="2" stroke-dasharray="2 2"/><path d="M5 6h8M5 10h8" stroke="#e4f0fa" stroke-width="2" stroke-dasharray="2 2"/></svg></button>
    <button><svg><path d="M4.500 3.500h7v9h-7z" fill="#fff" stroke="#111"/><path d="M6 6h4M6 8h4M6 10h4" stroke="#111" stroke-dasharray="1 1"/></svg></button>
    <button><svg><path d="M5.500.5h5v5h5v5h-5v5h-5v-5h-5v-5h5z" fill="#f0f2f6" stroke="#555"/></svg></button>
  </div>
  <div class="right">
    <button class="text">模型</button>
    <button><svg><path d="M2 1h11v10H2z" fill="#fff" stroke="#333"/><path d="M5 3v6h6z" fill="#ccc" stroke="#333"/><path d="M0 14h15" stroke="#333"/></svg></button>
    <button><svg><path d="M1 2h6v7H1zM9 2h6v7H9z" fill="#eee" stroke="#333"/><path d="M0 12h16" stroke="#333" stroke-width="3"/></svg></button>
    <button class="scale"><svg><use href="#compass"/></svg>1:1<i class="caret black"></i></button>
    <button><svg><use href="#compass"/><circle cx="13" cy="9" r="3" fill="#ffb63c"/><path d="M12 12h2v3h-2z" fill="#fff"/></svg></button>
    <button><svg opacity=".45"><use href="#compass"/></svg></button>
    <button class="gap"><svg><circle cx="8" cy="8" r="6.500" fill="none" stroke="#222" stroke-width="3" stroke-dasharray="3 2"/><circle cx="8" cy="8" r="5.500" fill="#eee" stroke="#222"/><circle cx="8" cy="8" r="2" fill="#aaa" stroke="#222"/></svg></button>
    <button><svg><path d="M1 7h9v8H1z" fill="#eee" stroke="#222"/><path d="M8 7V4c0-4 6-4 6 0v4" fill="none" stroke="#333" stroke-width="2"/><path d="M5 9v4" stroke="#222" stroke-width="2"/></svg></button>
    <button><svg><circle cx="8" cy="8" r="6.500" fill="#777" stroke="#999"/><path d="M5 4l5 6M5 12c4 2 7 0 7-4" fill="none" stroke="#ddd" stroke-width="2"/></svg></button>
    <span class="tray"><svg><path d="M1 1h7l3 4v6H1z" fill="#3f7fc4" stroke="#124"/><path d="M2 7h9v7H2z" fill="#f2cf3c" stroke="#653"/><path d="M7 10l3 4 6-7" fill="none" stroke="#38a818" stroke-width="3"/></svg><svg><use href="#bulb"/></svg></span>
    <button class="narrow" aria-label="状态栏菜单"><i class="caret tiny black"></i></button>
    <button><svg><path d="M1 2h14v12H1z" fill="#eee" stroke="#333"/><path d="M1 2h14v3H1z" fill="#556"/></svg></button>
    <svg class="sizegrip"><path d="M11 3h3v3h-3zM11 8h3v3h-3zM6 8h3v3H6zM11 13h3v3h-3zM6 13h3v3H6zM1 13h3v3H1z" fill="#ddd"/></svg>
  </div>
</footer>
<div class="desktop"></div>
</body>
</html>
```
FILE: styles.css
```css
* { box-sizing: border-box; }
html, body { height: 100%; }
body {
  margin: 0;
  display: flex;
  flex-direction: column;
  background: #666;
  color: #333;
  font: 12px/16px "Noto Sans", "Noto Sans CJK SC", sans-serif;
  overflow: hidden;
}
button, select, input { font: inherit; color: inherit; border: 0; padding: 0; margin: 0; background: none; outline: 0; }
select { appearance: none; }
button { display: flex; align-items: center; justify-content: center; white-space: nowrap; }
h1, h2, p { margin: 0; font-size: 12px; font-weight: normal; }
svg { flex: none; display: block; }
.sprite { position: absolute; width: 0; height: 0; }

.caret { flex: none; width: 8px; height: 5px; background: #333; clip-path: polygon(0 0, 100% 0, 50% 100%); }
.caret.tiny { width: 5px; height: 3px; }
.caret.dim { background: #444; }
.caret.black { background: #000; }

/* title bar */
.titlebar {
  flex: none;
  display: flex;
  align-items: flex-start;
  height: 36px;
  padding-top: 13px;
  background: linear-gradient(#1b1f25 5px, #8e8e92 5px, #8e8e92 7px, #2a2a30 7px, #303036);
}
.appmenu {
  flex: none;
  width: 38px;
  height: 41px;
  margin-bottom: -18px;
  gap: 1px;
  border: 1px solid #111;
  background: linear-gradient(#bbb, #777 60%, #999);
  z-index: 2;
}
.appmenu .caret { width: 7px; height: 4px; }
.qat { display: flex; align-items: center; gap: 6px; height: 23px; padding: 0 2px 0 8px; background: linear-gradient(#8c8c8c, #555); }
.qat svg { width: 18px; }
.qat .caret { margin: 0 2px 0 0; }
.workspace { display: flex; align-items: center; width: 179px; height: 21px; margin-top: 1px; padding: 0 3px; gap: 2px; background: linear-gradient(#ddd, #bbb); color: #000; }
.workspace select { flex: 1; }
.workspace .caret { background: #444; }
.qatmore { width: 16px; height: 23px; background: linear-gradient(#8c8c8c, #555); }
.apptitle { flex: 1; display: flex; gap: 24px; padding-left: 409px; line-height: 16px; color: #b4b4b8; white-space: nowrap; }
.infocenter { display: flex; align-items: center; width: 445px; height: 23px; background: linear-gradient(#999, #555); }
.infocenter .arrow { width: 15px; }
.infocenter input { width: 178px; height: 21px; padding-left: 4px; background: #f6f6f6; font-style: italic; }
.infocenter input::placeholder, .lines input::placeholder { color: #777; opacity: 1; }
.infocenter button { margin-left: 7px; }
.infocenter .arrow { margin: 0; }
.signin { flex: 1; gap: 6px; color: #fff; }
.infocenter .signin .caret { margin-left: auto; }
.a360 { gap: 5px; }
.infocenter .help { gap: 5px; margin-left: 10px; padding: 0 6px; border-left: 1px solid #999; }
.winbuttons { display: flex; height: 19px; margin: -7px 2px 0 20px; border: 1px solid #888; border-top: 0; border-radius: 0 0 4px 4px; }
.winbuttons button { width: 28px; border-right: 1px solid #777; }
.winbuttons .close { width: 45px; border: 0; }

/* ribbon tabs */
.ribbontabs { flex: none; display: flex; align-items: flex-end; height: 21px; padding-left: 43px; background: #3f3f3f; color: #f0f0f0; }
.ribbontabs button { height: 17px; padding: 0 10px; }
.ribbontabs button.on { padding: 0 9px; margin-right: 1px; background: linear-gradient(#ddd, #fff); color: #333; }
.ribbontabs .minimize { padding: 0 0 2px 24px; }

/* ribbon */
.ribbon { flex: none; display: flex; height: 99px; background: linear-gradient(#d4d4d4, #a0a0a0 80%, #8f8f8f); border-top: 1px solid #fff; border-bottom: 1px solid #ddd; }
.panel { display: flex; flex-direction: column; background: #fdfdfd; border-right: 2px solid #aaa; }
.panel:last-child { border: 0; }
.panel .body { flex: 1; display: flex; align-items: flex-start; padding-top: 6px; }
.panel h2 { display: flex; align-items: center; justify-content: center; height: 18px; background: #eee; border-top: 1px solid #ddd; }
.panel h2 .caret { margin-left: 6px; }
.draw { width: 210px; }
.modify { width: 226px; }
.modify .body { padding-left: 4px; }
.layers { width: 215px; }
.annotate { width: 118px; }
.block { width: 134px; }
.props { width: 205px; }
.group { width: 68px; }
.utils { width: 100px; }
.clip { width: 74px; }
.big { flex: none; flex-direction: column; justify-content: flex-start; line-height: 16px; padding-top: 1px; }
.big svg { margin-bottom: 3px; }
.big .caret { margin-top: 3px; }
.w1 { width: 38px; }
.w2 { width: 44px; }
.w3 { width: 48px; }
.w4 { width: 70px; }
.rows { display: flex; flex-direction: column; gap: 2px; }
.c1 { width: 59px; }
.c2 { width: 71px; }
.c3 { width: 64px; }
.c4 { width: 82px; }
.draw .rows, .annotate .rows, .utils .rows { margin-left: 2px; }
.clip .rows { margin-left: 4px; }
.group .big { margin-left: 1px; }
.item { height: 22px; gap: 5px; justify-content: flex-start; }
.item svg { margin-left: 2px; }
.item .caret { margin-left: 7px; }
.annotate .item .caret, .block .item .caret { margin-left: 2px; }
.box { width: 24px; height: 22px; border: 1px solid #ccc; background: linear-gradient(#fff, #f0f1f3); }
.split { width: 36px; gap: 6px; }

.panel .stackbody { flex-direction: column; align-items: stretch; gap: 2px; padding-left: 2px; padding-right: 2px; }
.panel.layers .stackbody { padding-top: 4px; }
.boxrow { display: flex; gap: 4px; }
.pair { display: flex; }
.pair .box + .box { border-left-color: #ddd; }
.combo { flex: 1; display: flex; align-items: center; min-width: 0; height: 22px; padding: 0 3px; border: 1px solid #c4c4c8; background: linear-gradient(#fff, #f0f1f3); }
.combo select { flex: 1; min-width: 0; overflow: hidden; }
.layer { gap: 3px; }
.layer .caret { margin-left: 4px; }
.swatch { flex: none; width: 14px; height: 14px; border: 1px solid #000; }
.layer .swatch { margin: 0 2px; }
.grey { background: #bfbfbf; }
.blue { width: 16px; height: 16px; margin-right: 2px; background: #00f; }
.prop { display: flex; align-items: center; gap: 2px; }
.rule { flex: none; width: 62px; height: 1px; margin-right: 4px; background: #000; }
.short { width: 58px; margin-left: 4px; }
.props h2 { justify-content: space-between; padding-right: 4px; }
.props h2 span { display: flex; align-items: center; }

/* document tabs */
.doctabs { flex: none; display: flex; align-items: flex-end; height: 32px; padding: 0 0 7px 16px; background: linear-gradient(#9e9e9e, #919191 26px, #ccc 26px, #ccc 27px, #666 27px); }
.doc { height: 20px; padding: 0 12px; }
.first { width: 202px; justify-content: flex-start; color: #555; background: linear-gradient(#aaa, #999); clip-path: polygon(6px 0, 98% 0, 100% 50%, 98% 100%, 0 100%); }
.active { width: 129px; margin-left: -2px; padding-left: 11px; gap: 24px; justify-content: flex-start; color: #000; background: linear-gradient(#ddd, #b8b8b8); clip-path: polygon(6px 0, 119px 0, 100% 100%, 0 100%); }
.newdoc { height: 18px; }

/* drawing window */
.work { flex: 1; min-height: 0; display: flex; }
.view { flex: 1; min-width: 0; display: flex; flex-direction: column; margin-bottom: 5px; border-top: 1px solid #888; border-right: 2px solid #f4f4f4; }
.canvas { flex: 1; min-height: 0; position: relative; background: #1e1f25; }
.drawing { width: 100%; height: 100%; }
.drawing text { fill: #0ff; font: 96px "Noto Sans CJK SC", sans-serif; }
.mdi { position: absolute; top: 10px; right: 11px; display: flex; gap: 8px; }
.navbar { position: absolute; top: 28px; right: 4px; border-radius: 4px; background: #54575c; }
.layouts { flex: none; display: flex; height: 17px; background: #f0f0f0; border-bottom: 2px solid #fff; color: #000; }
.step { width: 14px; border-right: 1px solid #999; }
.model { width: 44px; color: #d8b04a; background: #1e1f25; clip-path: polygon(0 0, 100% 0, 40px 100%, 6px 100%); }
.sheet { width: 40px; }

/* docked toolbars */
.tools { flex: none; display: flex; gap: 3px; padding: 0 5px 0 4px; overflow: hidden; }
.column { display: flex; flex-direction: column; align-items: flex-start; gap: 1px; }
.toolbar { width: 25px; background: #f0efec; border: 1px solid #444; border-width: 0 1px; }
.toolbar button { width: 22px; height: 22px; }
.toolbar svg { width: 16px; height: 16px; }
.toolbar hr { width: 19px; height: 2px; margin: 2px auto; border: 0; background: #aaa; }
.grip { display: block; height: 9px; padding: 3px 4px; background: repeating-linear-gradient(90deg, #aaa 0 1px, #484848 1px 3px) content-box, #484848; }

/* command line */
.command { flex: none; display: flex; height: 53px; margin-right: 3px; border-bottom: 2px solid #222; }
.handle { display: flex; flex-direction: column; align-items: center; justify-content: space-between; width: 20px; padding: 4px 2px 2px; background: linear-gradient(#888, #444); }
.dots { width: 16px; height: 5px; background: repeating-linear-gradient(90deg, #aaa 0 1px, transparent 1px 3px); }
.lines { flex: 1; display: flex; flex-direction: column; background: #fff; }
.lines p { height: 28px; padding: 8px 2px 0; font: 13px/19px "Noto Sans CJK SC", sans-serif; color: #000; background: #c8c8c8; border-bottom: 1px solid #888; white-space: pre; }
.lines code { font: 12px "Liberation Mono", monospace; }
.lines label { flex: 1; display: flex; align-items: center; gap: 4px; padding-left: 5px; }
.lines input { flex: 1; margin-left: 4px; font-style: italic; }
.lines input::placeholder { color: #999; }

/* status bar */
.status { flex: none; display: flex; height: 23px; margin-right: 3px; background: linear-gradient(#999, #777); border-bottom: 1px solid #e88; color: #000; }
.readout { display: flex; align-items: center; gap: 12px; width: 524px; padding-left: 4px; font: 10px/14px "Liberation Mono", monospace; white-space: pre; }
.toggles, .right { display: flex; }
.status svg { width: 16px; height: 16px; }
.status button { width: 22px; background: linear-gradient(#b8b8b8, #999); border-left: 1px solid #666; }
.status button.on { background: linear-gradient(#e4f6fa, #9ccdd8); }
.right { margin-left: auto; }
.status .text { width: 30px; }
.status .scale { width: 54px; gap: 4px; margin-left: 18px; font: 12px "Liberation Mono", monospace; }
.status .gap { margin-left: 6px; }
.tray { display: flex; align-items: center; justify-content: center; gap: 6px; width: 50px; margin: 2px 3px; border: 1px solid #555; background: #aaa; }
.status .narrow { width: 11px; }
.sizegrip { align-self: flex-end; }
.desktop { flex: none; height: 5px; background: linear-gradient(90deg, #f00 17px, #a6855f 20px, #5b3f2a 60px, #3a2b4a 100px, #8a6a4a 140px, #e8dcdc 170px, #8a6a3a 290px, #eee6e6 300px, #eee6e6 1876px, #2a2220 1890px, #2a2220 2055px, #f00 2055px); }
```
